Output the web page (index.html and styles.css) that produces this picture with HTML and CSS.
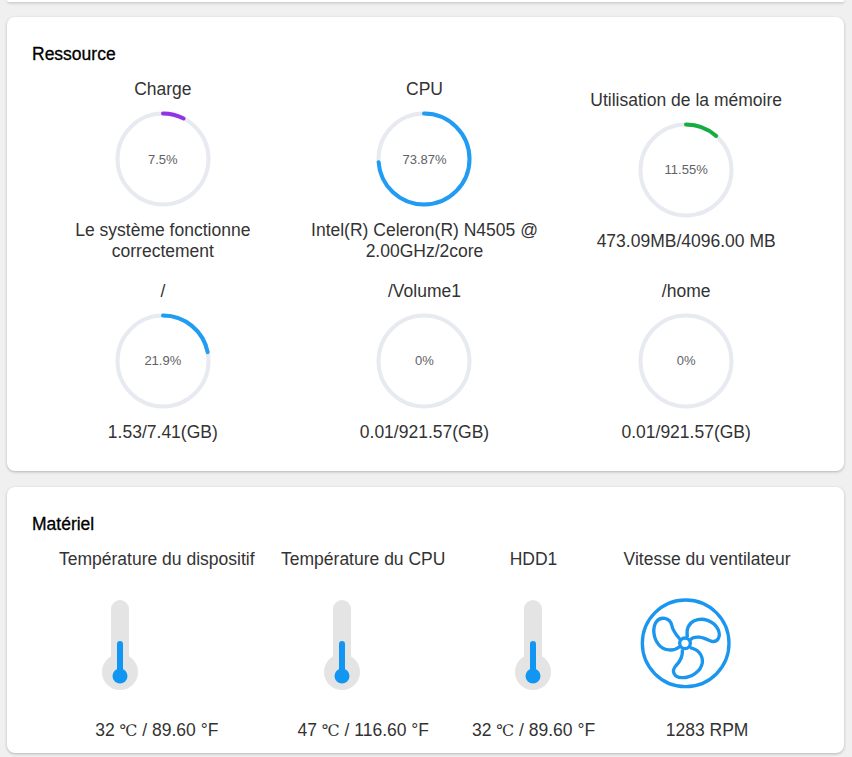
FILE: index.html
```html
<!DOCTYPE html>
<html lang="fr">
<head>
    <meta charset="UTF-8">
    <meta name="viewport" content="width=device-width, initial-scale=1.0">
    <title>Tableau de bord</title>
    <link rel="stylesheet" href="styles.css">
</head>
<body>
    <div class="card card-cut"></div>

    <section class="card card-resource">
        <h2 class="card-title">Ressource</h2>
        <div class="gauge-grid">
            <div class="gauge">
                <p class="gauge-label">Charge</p>
                <div class="ring">
                    <svg viewBox="0 0 96 96"><circle class="ring-track" cx="48" cy="48" r="45.5"/><circle class="ring-bar bar-purple" cx="48" cy="48" r="45.5" pathLength="100" stroke-dasharray="7.5 100"/></svg>
                    <span class="ring-text">7.5%</span>
                </div>
                <p class="gauge-label">Le système fonctionne correctement</p>
            </div>
            <div class="gauge">
                <p class="gauge-label">CPU</p>
                <div class="ring">
                    <svg viewBox="0 0 96 96"><circle class="ring-track" cx="48" cy="48" r="45.5"/><circle class="ring-bar bar-blue" cx="48" cy="48" r="45.5" pathLength="100" stroke-dasharray="73.87 100"/></svg>
                    <span class="ring-text">73.87%</span>
                </div>
                <p class="gauge-label">Intel(R) Celeron(R) N4505 @ 2.00GHz/2core</p>
            </div>
            <div class="gauge">
                <p class="gauge-label">Utilisation de la mémoire</p>
                <div class="ring">
                    <svg viewBox="0 0 96 96"><circle class="ring-track" cx="48" cy="48" r="45.5"/><circle class="ring-bar bar-green" cx="48" cy="48" r="45.5" pathLength="100" stroke-dasharray="11.55 100"/></svg>
                    <span class="ring-text">11.55%</span>
                </div>
                <p class="gauge-label">473.09MB/4096.00 MB</p>
            </div>
            <div class="gauge">
                <p class="gauge-label">/</p>
                <div class="ring">
                    <svg viewBox="0 0 96 96"><circle class="ring-track" cx="48" cy="48" r="45.5"/><circle class="ring-bar bar-blue" cx="48" cy="48" r="45.5" pathLength="100" stroke-dasharray="21.9 100"/></svg>
                    <span class="ring-text">21.9%</span>
                </div>
                <p class="gauge-label">1.53/7.41(GB)</p>
            </div>
            <div class="gauge">
                <p class="gauge-label">/Volume1</p>
                <div class="ring">
                    <svg viewBox="0 0 96 96"><circle class="ring-track" cx="48" cy="48" r="45.5"/></svg>
                    <span class="ring-text">0%</span>
                </div>
                <p class="gauge-label">0.01/921.57(GB)</p>
            </div>
            <div class="gauge">
                <p class="gauge-label">/home</p>
                <div class="ring">
                    <svg viewBox="0 0 96 96"><circle class="ring-track" cx="48" cy="48" r="45.5"/></svg>
                    <span class="ring-text">0%</span>
                </div>
                <p class="gauge-label">0.01/921.57(GB)</p>
            </div>
        </div>
    </section>

    <section class="card card-hardware">
        <h2 class="card-title">Matériel</h2>
        <div class="sensor-row">
            <div class="sensor">
                <p class="gauge-label">Température du dispositif</p>
                <svg class="sensor-icon" viewBox="0 0 122 130">
                    <use href="#thermo"/>
                </svg>
                <p class="gauge-label">32 <span class="deg">℃</span> / 89.60 °F</p>
            </div>
            <div class="sensor">
                <p class="gauge-label">Température du CPU</p>
                <svg class="sensor-icon" viewBox="0 0 122 130">
                    <use href="#thermo"/>
                </svg>
                <p class="gauge-label">47 <span class="deg">℃</span> / 116.60 °F</p>
            </div>
            <div class="sensor">
                <p class="gauge-label">HDD1</p>
                <svg class="sensor-icon" viewBox="0 0 122 130">
                    <use href="#thermo"/>
                </svg>
                <p class="gauge-label">32 <span class="deg">℃</span> / 89.60 °F</p>
            </div>
            <div class="sensor sensor-fan">
                <p class="gauge-label">Vitesse du ventilateur</p>
                <svg class="sensor-icon fan" viewBox="15 0 366 390">
                    <circle cx="200" cy="190" r="130"/>
                    <circle cx="198" cy="190" r="16"/>
                    <path d="M185 180 C172 165 162 155 158 135 C152 113 125 108 112 125 C100 142 102 175 120 195 C136 214 165 214 182 200"/>
                    <path d="M205 172 C202 150 208 130 226 122 C250 112 284 120 298 150 C306 170 296 188 278 184 C258 176 232 162 212 180"/>
                    <path d="M213 203 C238 208 252 226 250 248 C246 274 216 294 188 293 C166 292 156 274 170 258 C186 242 192 228 190 208"/>
                </svg>
                <p class="gauge-label">1283 RPM</p>
            </div>
        </div>
    </section>

    <!-- thermometer shared by the three temperature sensors -->
    <svg class="defs" width="0" height="0">
        <defs>
            <g id="thermo">
                <rect x="52" y="20" width="18" height="80" rx="9" fill="#e4e4e4"/>
                <circle cx="61" cy="92" r="18" fill="#e4e4e4"/>
                <rect x="58" y="61" width="6" height="36" rx="3" fill="#1296f3"/>
                <circle cx="61" cy="96" r="7.5" fill="#1296f3"/>
            </g>
        </defs>
    </svg>
</body>
</html>
```

FILE: styles.css
```css
body {
    font-family: "Liberation Sans", Arial, sans-serif;
    margin: 0;
    padding: 0 8px 4px 7px;
    background-color: #f0f0f0;
    color: #303133;
    display: flex;
    flex-direction: column;
    gap: 15px;
}
.card {
    background-color: #fff;
    border-radius: 8px;
    box-shadow: 0 1px 3px rgba(0, 0, 0, 0.25);
}
.card-cut {
    height: 1.5px;
    border-radius: 0 0 8px 8px;
}
.card-resource {
    padding: 27.5px 27px 28.5px 25px;
}
.card-hardware {
    margin-top: 1px;
    padding: 27px 27px 12px 25px;
}
.card-title {
    margin: 0 0 14px;
    font-size: 17.5px;
    line-height: 21px;
    font-weight: 400;
    color: #000;
    -webkit-text-stroke: 0.3px #000;
}
.gauge-grid {
    display: grid;
    grid-template-columns: repeat(3, 1fr);
    row-gap: 18.5px;
    align-items: center;
}
.gauge {
    display: flex;
    flex-direction: column;
    align-items: center;
    gap: 12px;
    text-align: center;
}
.gauge-label {
    margin: 0;
    font-size: 17.5px;
    line-height: 21px;
    color: #333;
}
.deg {
    font-family: "DejaVu Serif", "Liberation Serif", serif;
    font-size: 16px;
}
.ring {
    position: relative;
    width: 96px;
    height: 96px;
    margin: -1px 0 1px;
}
.ring svg {
    display: block;
    width: 96px;
    height: 96px;
    transform: rotate(-90deg);
}
.ring circle {
    fill: none;
    stroke-width: 4;
}
.ring-track {
    stroke: #e8eaf1;
}
.ring-bar {
    stroke-linecap: round;
}
.bar-purple {
    stroke: #9333e6;
}
.bar-blue {
    stroke: #209cf5;
}
.bar-green {
    stroke: #13ae3f;
}
.ring-text {
    position: absolute;
    inset: 0;
    display: flex;
    align-items: center;
    justify-content: center;
    font-size: 13px;
    color: #606266;
}
.sensor-row {
    display: flex;
    gap: 26.5px;
    margin-left: 27px;
}
.sensor {
    display: flex;
    flex-direction: column;
    align-items: center;
}
.sensor-fan {
    margin-left: 2px;
}
.sensor-icon {
    display: block;
    align-self: flex-start;
    width: 122px;
    height: 130px;
    margin: 9.5px 0 10.5px;
}
.fan {
    fill: none;
    stroke: #1a96ee;
    stroke-width: 10;
}
.defs {
    position: absolute;
}
```
